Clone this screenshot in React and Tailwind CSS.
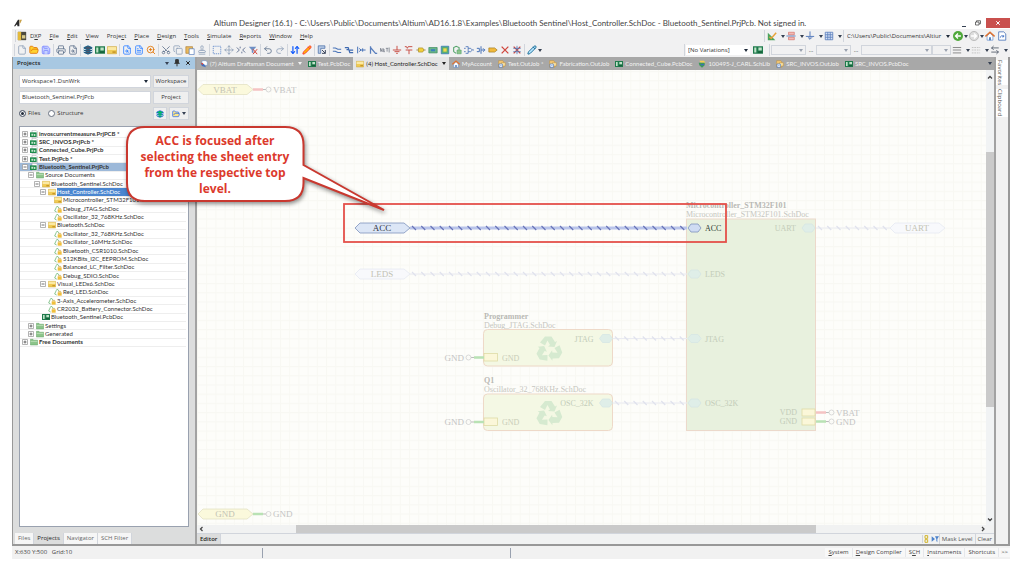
import {
  ArrowDownUp, ArrowLeftRight, Copy, File, FileSearch, FileText, FolderOpen,
  Layers, Move, Pencil, Printer, Redo2, Save, Scissors, Stamp, Undo2, X, ZoomIn,
} from "lucide-react";
import clsx from "clsx";

const menus = [
  "D&XP", "&File", "&Edit", "&View", "Proje&ct", "&Place", "&Design", "&Tools",
  "&Simulate", "&Reports", "&Window", "&Help",
];

const tree = [
  { level: 0, icon: "project", label: "invoscurrentmeasure.PrjPCB *", open: false, bold: true },
  { level: 0, icon: "project", label: "SRC_INVOS.PrjPcb *", open: false, bold: true },
  { level: 0, icon: "project", label: "Connected_Cube.PrjPcb", open: false, bold: true },
  { level: 0, icon: "project", label: "Test.PrjPcb *", open: false, bold: true },
  { level: 0, icon: "project", label: "Bluetooth_Sentinel.PrjPcb", open: true, bold: true, active: true },
  { level: 1, icon: "folder", label: "Source Documents", open: true },
  { level: 2, icon: "sheet", label: "Bluetooth_Sentinel.SchDoc", open: true },
  { level: 3, icon: "sheet", label: "Host_Controller.SchDoc", open: true, selected: true },
  { level: 4, icon: "sheet", label: "Microcontroller_STM32F101.SchDoc" },
  { level: 4, icon: "device", label: "Debug_JTAG.SchDoc" },
  { level: 4, icon: "device", label: "Oscillator_32_768KHz.SchDoc" },
  { level: 3, icon: "sheet", label: "Bluetooth.SchDoc", open: true },
  { level: 4, icon: "device", label: "Oscillator_32_768KHz.SchDoc" },
  { level: 4, icon: "device", label: "Oscillator_16MHz.SchDoc" },
  { level: 4, icon: "device", label: "Bluetooth_CSR1010.SchDoc" },
  { level: 4, icon: "device", label: "512KBits_I2C_EEPROM.SchDoc" },
  { level: 4, icon: "device", label: "Balanced_LC_Filter.SchDoc" },
  { level: 4, icon: "device", label: "Debug_SDIO.SchDoc" },
  { level: 3, icon: "sheet", label: "Visual_LEDx6.SchDoc", open: true },
  { level: 4, icon: "device", label: "Red_LED.SchDoc" },
  { level: 3, icon: "device", label: "3-Axis_Accelerometer.SchDoc" },
  { level: 3, icon: "device", label: "CR2032_Battery_Connector.SchDoc" },
  { level: 2, icon: "pcb", label: "Bluetooth_Sentinel.PcbDoc" },
  { level: 1, icon: "folder", label: "Settings", open: false },
  { level: 1, icon: "folder", label: "Generated", open: false },
  { level: 0, icon: "folder", label: "Free Documents", open: false, bold: true },
];

const indents = ["pl-0.5", "pl-2", "pl-3.5", "pl-5", "pl-[26px]"];

function Glyph({ className = "size-2.5", children }) {
  return (
    <svg viewBox="0 0 12 12" fill="none" className={clsx("shrink-0", className)} aria-hidden="true">
      {children}
    </svg>
  );
}

const glyphs = {
  pcb: (
    <>
      <path d="M0 1.5h12v9H0z" fill="#1f7a4c" />
      <path d="M1.5 3h2.500v6H1.5zM6.500 3h4v3.500h-4z" fill="#bfe3c8" />
      <path d="M6 8.500h5" stroke="#0f4d2e" />
    </>
  ),
  project: (
    <>
      <path d="M3 0.500h6l2.500 2.500v8.500H3z" fill="#fff" stroke="#9aa0a6" strokeWidth="0.800" />
      <path d="M0 3.500h10v7H0z" fill="#1e8a4c" />
      <path d="M2 5.500h3v3H2zM6 6h2v3H6z" fill="#bfe3c8" />
    </>
  ),
  sheet: (
    <>
      <path d="M0.500 2h11v8.500h-11z" fill="#f0cb55" stroke="#c9a233" strokeWidth="0.700" />
      <path d="M1 2.500h10v3.500H1z" fill="#fbe9a4" />
      <path d="M6.500 7.500h4v2h-4z" fill="#c9982a" />
    </>
  ),
  folder: (
    <>
      <path d="M0.500 2h4l1 1.300h6v7.200h-11z" fill="#8cc48a" stroke="#62a063" strokeWidth="0.700" />
      <path d="M1 5h10v1H1z" fill="#c7e6c3" />
    </>
  ),
  device: (
    <>
      <path d="M1 9 3.500 3.500 5 1.500 7.500 5M1 9l3 1.500" stroke="#6fb878" strokeWidth="1.200" />
      <path d="M5.500 6.500H11.500V11.500H5.500z" fill="#f0bf3c" />
      <path d="M7 6.500V5h3v1.500" stroke="#c9a040" />
    </>
  ),
  outjob: (
    <>
      <path d="M1 1h6l1.500 2v8H1z" fill="#f3c877" stroke="#c08a30" strokeWidth="0.700" />
      <path d="M5 4h6v5H5z" fill="#f7dfa0" stroke="#c08a30" strokeWidth="0.700" />
      <path d="M1.500 6h5v5h-5z" fill="#fff" stroke="#3f73c4" />
      <path d="M3 9.500 5 7.500" stroke="#3f73c4" />
    </>
  ),
  home: (
    <>
      <path d="M2.500 6v5h7V6L6 2.500z" fill="#fff" stroke="#5a87c8" strokeWidth="0.800" />
      <path d="M0.500 6.500 6 1.500l5.500 5" stroke="#e0722e" strokeWidth="1.800" />
      <path d="M5 7.500h2V11H5z" fill="#3c6fb5" />
    </>
  ),
  draftsman: (
    <>
      <path d="M3 1h6l2 2v5H3z" fill="#fff" stroke="#6a8fc9" strokeWidth="0.800" />
      <path d="M1 5l5 1 3 5-6-2z" fill="#3c6fc4" />
      <path d="M1 4l4 1-1 3z" fill="#d9473d" />
    </>
  ),
  schlib: (
    <>
      <path d="M2 1h7l2 3H4z" fill="#f2cf54" />
      <path d="M1 4h9v4l-4 3.500L2 8z" fill="#3f9a58" />
      <path d="M4 6h5v2H4z" fill="#3c6fb5" />
    </>
  ),
  wire: <path d="M1 3.500h3l3 1.500h4M1 7.500h3l3 1.500h4" stroke="#4a74b8" strokeWidth="1.300" />,
  bus: <path d="M1 3h4l2 6h4M3 5.500h2M7 6h4" stroke="#3e69b0" strokeWidth="1.500" />,
  harness: <path d="M2 2v8M4.500 6h7M4 4l2 2-2 2M8 4v4" stroke="#4a74b8" strokeWidth="1.200" />,
  entry: <path d="M3 1.500v9M3 3l6 7h2" stroke="#5a7fbd" strokeWidth="1.500" />,
  net: <path d="M0.500 8V4l2 4V4M4 4v4h2M4 6h2M7 4h3M8.500 4v4M11 3v6" stroke="#6f7683" strokeWidth="0.900" />,
  gnd: <path d="M6 1v5M1 6h10M3 8h6M5 10h2" stroke="#c9534b" strokeWidth="1.200" />,
  vcc: <path d="M1 2h2l1 2 1-2h5M2 6h8M6 6v5" stroke="#c9534b" strokeWidth="1.200" />,
  part: (
    <>
      <path d="M0.500 6h11" stroke="#8b7a3a" />
      <path d="M3 3.500h5l1.500 2.500L8 8.500H3z" fill="#f2cf3c" stroke="#a98c25" strokeWidth="0.800" />
    </>
  ),
  block: (
    <>
      <path d="M1 3h10v6.500H1z" fill="#69b58a" stroke="#3d8a5e" strokeWidth="0.800" />
      <path d="M3.500 5h5v2.500h-5z" fill="#3b7fbd" />
    </>
  ),
  blockEntry: (
    <>
      <path d="M1.500 1.500h9v9h-9z" fill="#58ad72" stroke="#3b7fbd" />
      <path d="M4 4h4v4H4z" fill="#f2d84a" />
    </>
  ),
  deviceSheet: (
    <>
      <path d="M2 8V3l3-1.500L8.500 3v3M2 8l3 2" stroke="#53a36a" strokeWidth="1.300" />
      <path d="M6 6h5v4.500H6z" fill="#8cc48a" stroke="#53a36a" strokeWidth="0.700" />
    </>
  ),
  connector: <path d="M2 2h3v8H2M5 4h3l2 2-2 2H5M0 4h2M0 8h2M10 6h2" stroke="#4a74b8" />,
  connectorEntry: <path d="M6 1.500v9M1 4h3v4H1M6 6h5M8.500 4l2 2-2 2" stroke="#4a74b8" strokeWidth="1.200" />,
  port: <path d="M1 3.500h7L11 6 8 8.500H1z" fill="#f2b93c" stroke="#a07a20" strokeWidth="0.800" />,
  cross: <path d="M2 2l8 8M10 2l-8 8" stroke="#d0443b" strokeWidth="1.500" />,
  crossMask: (
    <>
      <path d="M2 2l8 8M10 2l-8 8" stroke="#d0443b" strokeWidth="1.500" />
      <path d="M6 1v10M1.500 4h9M1.500 8h9" stroke="#4a74b8" strokeWidth="0.900" />
    </>
  ),
  paste: (
    <>
      <path d="M1 2h8v8H1z" fill="#e9b95d" stroke="#a3742a" strokeWidth="0.700" />
      <path d="M5 4.500h6V11.500H5z" fill="#fff" stroke="#4a74b8" strokeWidth="0.800" />
    </>
  ),
  marquee: <path d="M1.500 1.500h9v9h-9z" stroke="#5b86c9" strokeDasharray="1.500 1" />,
  deselect: <path d="M1 3l3 3-3 3M11 3 8 6l3 3M5 2v2M7 8v2" stroke="#4e5f86" />,
  clearFilter: (
    <>
      <path d="M1 2h9L6.500 6v4l-2-1V6z" fill="#6f8fc4" />
      <path d="M6 5l5 6M11 5l-5 6" stroke="#d0443b" strokeWidth="1.200" />
    </>
  ),
  browse: (
    <>
      <path d="M1.500 1v9h3V4h5V1z" fill="#b9cbe6" stroke="#4a6ea8" strokeWidth="0.900" />
      <path d="M6 6l4 4M10 6v4H6" stroke="#3d485e" strokeWidth="1.200" />
    </>
  ),
  measure: (
    <>
      <path d="M1 2v9h9z" fill="#4ba35c" />
      <path d="M3 7l2 2 6-7" stroke="#e8a33a" strokeWidth="1.800" />
    </>
  ),
  align: (
    <>
      <path d="M3 1.500h7v3H3zM3 7.500h7v3H3z" fill="#f2b9b4" stroke="#d0645c" strokeWidth="0.700" />
      <path d="M0.500 6h11" stroke="#4a74b8" />
    </>
  ),
  power: <path d="M6 0.500v9M1 6.500h10M3.500 7.500 6 10l2.500-2.500" stroke="#5b7fbd" strokeWidth="1.200" />,
  grid: <path d="M1.500 1.500h9v9h-9zM4.500 1.500v9M7.500 1.500v9M1.500 4.500h9M1.500 7.500h9" fill="#d5e1f5" stroke="#5b7fbd" />,
  back: (
    <>
      <circle cx="6" cy="6" r="6" fill="#4fa83a" />
      <path d="M9.500 6H3M6 3 3 6l3 3" stroke="#fff" strokeWidth="1.600" />
    </>
  ),
  forward: (
    <>
      <circle cx="6" cy="6" r="5.500" fill="#dcdcdc" stroke="#b5b5b5" />
      <path d="M2.500 6H9M6 3l3 3-3 3" stroke="#fff" strokeWidth="1.600" />
    </>
  ),
  lines: <path d="M1 3h10M1 6h10M1 9.500h10" stroke="#8d8d8d" strokeWidth="1.200" />,
  dashes: <path d="M1 3h10M1 6h10M1 9.500h10" stroke="#bcbcbc" strokeDasharray="2 1" />,
  page: (
    <>
      <path d="M2 1h6l2.500 2.500V11H2z" fill="#fff" stroke="#4a74b8" />
      <path d="M4 8c0-3 4-3 4-1M8 5v2H6" stroke="#3c6fc4" />
    </>
  ),
};

const toolGroups = [
  [
    ["New", <File className="size-2.5 text-slate-400" />],
    ["Open", <FolderOpen className="size-2.5 fill-amber-300 text-amber-600" />],
    ["Save", <Save className="size-2.5 fill-indigo-200 text-indigo-400" />],
  ],
  [
    ["Print", <Printer className="size-2.5 text-slate-500" />],
    ["Print preview", <FileSearch className="size-2.5 text-slate-500" />],
  ],
  [
    ["Devices view", <Layers className="size-2.5 fill-slate-600 text-sky-800" />],
    ["Board", "pcb"],
    ["Sheet", "sheet"],
  ],
  [
    ["Zoom document", <FileSearch className="size-2.5 text-blue-500" />],
    ["Zoom area", <FileText className="size-2.5 text-blue-500" />],
    ["Zoom selected", <ZoomIn className="size-2.5 text-amber-600" />],
  ],
  [
    ["Cut", <Scissors className="size-2.5 -rotate-90 text-slate-500" />],
    ["Copy", <Copy className="size-2.5 text-slate-400" />],
    ["Paste", "paste"],
    ["Rubber stamp", <Stamp className="size-2.5 text-slate-400" />],
  ],
  [
    ["Select area", "marquee"],
    ["Move", <Move className="size-2.5 text-slate-400" />],
    ["Deselect", "deselect"],
    ["Clear filter", "clearFilter"],
  ],
  [
    ["Undo", <Undo2 className="size-2.5 text-slate-500" />],
    ["Redo", <Redo2 className="size-2.5 text-slate-400" />],
  ],
  [
    ["Hierarchy", <ArrowDownUp className="size-2.5 text-blue-600" strokeWidth={3} />],
    ["Cross probe", <Pencil className="size-2.5 fill-amber-400 text-red-500" />],
  ],
  [["Browse", "browse"]],
  [
    ["Wire", "wire"], ["Bus", "bus"], ["Harness", "harness"], ["Bus entry", "entry"],
    ["Net label", "net"], ["Ground", "gnd"], ["VCC", "vcc"], ["Part", "part"],
    ["Sheet symbol", "block"], ["Sheet entry", "blockEntry"], ["Device sheet", "deviceSheet"],
    ["Harness connector", "connector"], ["Harness entry", "connectorEntry"], ["Port", "port"],
    ["No ERC", "cross"], ["Compile mask", "crossMask"],
  ],
  [["Highlight", <Pencil className="size-2.5 fill-sky-200 text-sky-800" />]],
];

const tabs = [
  { icon: "draftsman", label: "(7) Altium Draftsman Document", caret: true },
  { icon: "pcb", label: "Test.PcbDoc" },
  { icon: "sheet", label: "(4) Host_Controller.SchDoc", caret: true, active: true },
  { icon: "home", label: "MyAccount" },
  { icon: "outjob", label: "Test.OutJob *" },
  { icon: "outjob", label: "Fabrication.OutJob" },
  { icon: "pcb", label: "Connected_Cube.PcbDoc" },
  { icon: "schlib", label: "100495-J_CARL.SchLib" },
  { icon: "outjob", label: "SRC_INVOS.OutJob" },
  { icon: "pcb", label: "SRC_INVOS.PcbDoc" },
];

function Mnemonic({ text }) {
  const [before, after] = text.split("&");
  return (
    <>
      {before}
      <span className="underline">{after[0]}</span>
      {after.slice(1)}
    </>
  );
}

function Caret({ className = "text-gray-700" }) {
  return (
    <svg viewBox="0 0 4 3" className={clsx("h-[3px] w-1 shrink-0", className)} aria-hidden="true">
      <path d="M0 0h4L2 3z" fill="currentColor" />
    </svg>
  );
}

function Divider() {
  return <span className="mx-px h-3 w-px shrink-0 bg-gray-300" />;
}

function Tool({ label, icon }) {
  return (
    <button type="button" aria-label={label} className="flex size-3 shrink-0 items-center justify-center">
      {typeof icon === "string" ? <Glyph>{glyphs[icon]}</Glyph> : icon}
    </button>
  );
}

function DropTool({ label, icon, tight }) {
  return (
    <span className={clsx("flex shrink-0 items-center", tight ? "w-4" : "w-[19px] gap-[3px]")}>
      <Tool label={label} icon={icon} />
      <Caret />
    </span>
  );
}

function Combo({ label, value = "", className, muted }) {
  return (
    <span className={clsx("relative flex items-center", className)}>
      <select aria-label={label} className="h-full w-full appearance-none pl-0.5 outline-none">
        <option>{value}</option>
      </select>
      <span className="pointer-events-none absolute right-0.5">
        <Caret className={muted ? "text-gray-400" : "text-gray-800"} />
      </span>
    </span>
  );
}

function TitleBar() {
  return (
    <header className="flex h-3 items-center bg-white">
      <svg viewBox="0 0 12 12" className="ml-0.5 size-2" aria-hidden="true">
        <path d="M0 11 6 1h2v10H5V8.500H3.500L2 11z" fill="#2b2b2b" />
        <path d="M8.500 1H12L9.500 6.500h-1z" fill="#c9a24a" />
      </svg>
      <h1 className="flex-1 truncate pl-10 text-center font-['Lato','Open_Sans',sans-serif] text-[8px] leading-3 text-[#444]">
        Altium Designer (16.1) - C:\Users\Public\Documents\Altium\AD16.1.8\Examples\Bluetooth
        Sentinel\Host_Controller.SchDoc - Bluetooth_Sentinel.PrjPcb. Not signed in.
      </h1>
      <button type="button" aria-label="Minimize" className="flex h-2 w-3 items-end justify-center">
        <span className="h-px w-1 bg-gray-700" />
      </button>
      <button type="button" aria-label="Restore" className="flex h-2 w-4 items-center justify-center">
        <Glyph className="size-1.5">
          <path d="M1 4h7v6H1zM3 4V1.500h8v6H8" stroke="#444" strokeWidth="1.500" />
        </Glyph>
      </button>
      <button type="button" aria-label="Close" className="flex h-2.5 w-6 items-center justify-center bg-[#c9504e] text-white">
        <X className="size-1.5" strokeWidth={4} />
      </button>
    </header>
  );
}

function MenuBar() {
  return (
    <div className="flex h-3.5 items-center pl-0.5">
      <Divider />
      <svg viewBox="0 0 12 12" className="mr-px size-2.5" aria-hidden="true">
        <path d="M1 1h10v10H1z" fill="#4c4a3e" />
        <path d="M1 1h4v10H1z" fill="#e4ba3a" />
        <path d="M6 5h4v4H6z" fill="#d7c98a" />
      </svg>
      <nav className="flex gap-2 pl-0.5">
        {menus.map((menu) => (
          <button key={menu} type="button">
            <Mnemonic text={menu} />
          </button>
        ))}
      </nav>
      <div className="ml-auto flex items-center pr-0.5">
        <Divider />
        <DropTool label="Utilities" icon="measure" />
        <DropTool label="Alignment" icon="align" />
        <DropTool label="Power sources" icon="power" />
        <DropTool label="Grids" icon="grid" />
        <Divider />
        <Combo label="Path" value="C:\Users\Public\Documents\Altiur" className="h-3 w-[107px]" />
        <DropTool label="Back" icon="back" tight />
        <DropTool label="Forward" icon="forward" tight />
        <Tool label="Home" icon="home" />
        <Tool label="Page" icon="page" />
      </div>
    </div>
  );
}

function ToolBar() {
  return (
    <div className="flex h-3.5 items-center pl-px">
      {toolGroups.map((group, i) => (
        <div key={i} className="flex items-center">
          <Divider />
          {group.map(([label, icon]) => (
            <Tool key={label} label={label} icon={icon} />
          ))}
        </div>
      ))}
      <Caret />
      <div className="ml-auto flex items-center pr-0.5">
        <Divider />
        <Combo label="Variations" value="[No Variations]" className="mr-0.5 h-2.5 w-16 bg-white" />
        <Tool label="Board" icon="pcb" />
        <span className="w-1" />
        <Divider />
        <Combo label="Filter" muted className="h-2.5 w-[35px] border border-gray-300" />
        <span className="w-2.5 text-center leading-3">...</span>
        <Combo label="Mask" muted className="h-2.5 w-[35px] border border-gray-300" />
        <span className="w-2.5 text-center leading-3">...</span>
        <Combo label="Font" muted className="h-2.5 w-[71px] border border-gray-300" />
        <Combo label="Size" muted className="h-2.5 w-[19px] border border-gray-300" />
        <DropTool label="Line style" icon="lines" />
        <DropTool label="Line width" icon="dashes" />
        <DropTool label="Arrows" icon={<ArrowLeftRight className="size-2.5 text-gray-600" />} />
      </div>
    </div>
  );
}

function TreeRow({ node }) {
  return (
    <li
      className={clsx(
        "flex items-center border-b border-[#eeeeee]",
        indents[node.level],
        node.active && "bg-[#9db9d9]",
        node.bold && "font-bold"
      )}
    >
      <span className="flex w-2 shrink-0 items-center">
        {node.open !== undefined && (
          <Glyph className="size-1.5">
            <path d="M1 1h10v10H1z" fill="#fff" stroke="#999" strokeWidth="1.500" />
            <path d={node.open ? "M3 6h6" : "M3 6h6M6 3v6"} stroke="#444" strokeWidth="1.500" />
          </Glyph>
        )}
      </span>
      <Glyph className="mr-px size-2">{glyphs[node.icon]}</Glyph>
      <span className={clsx("leading-[8px] whitespace-nowrap", node.selected && "flex-1 bg-[#4a86d0] text-white")}>
        {node.label}
      </span>
    </li>
  );
}

function ProjectsPanel() {
  return (
    <aside className="flex w-[182px] shrink-0 flex-col bg-[#dcdddd]">
      <div className="flex h-3 items-center gap-1 bg-[#a8c8e2] px-1 text-[#222]">
        <h2 className="flex-1 font-semibold">Projects</h2>
        <Caret />
        <Glyph className="size-2">
          <path d="M4 1h4v5H4zM2 6.500h8M6 7v4" fill="#333" stroke="#333" strokeWidth="1.500" />
        </Glyph>
        <X className="size-1.5" strokeWidth={4} />
      </div>
      <form className="grid auto-rows-[13px] grid-cols-[1fr_36px] gap-x-0.5 gap-y-[3px] px-1.5 pt-1.5">
        <Combo label="Workspace" value="Workspace1.DsnWrk" className="border border-gray-300 bg-white" />
        <button type="button" className="border border-gray-300 bg-[#efefef]">Workspace</button>
        <input aria-label="Project" defaultValue="Bluetooth_Sentinel.PrjPcb" className="min-w-0 border border-gray-300 bg-white pl-0.5" />
        <button type="button" className="border border-gray-300 bg-[#efefef]">Project</button>
        <div className="flex items-center gap-2">
          {["Files", "Structure"].map((mode) => (
            <label key={mode} className="flex items-center gap-0.5">
              <input
                type="radio"
                name="mode"
                defaultChecked={mode === "Files"}
                className="size-[7px] appearance-none rounded-full border border-gray-500 bg-white checked:bg-gray-800 checked:shadow-[inset_0_0_0_1px_white]"
              />
              {mode}
            </label>
          ))}
        </div>
        <div className="flex justify-between">
          <button type="button" aria-label="Refresh" className="flex w-3.5 items-center justify-center border border-gray-300 bg-[#efefef]">
            <Layers className="size-2 fill-green-500 text-blue-700" />
          </button>
          <button type="button" aria-label="Options" className="flex w-5 items-center justify-center gap-0.5 border border-gray-300 bg-[#efefef]">
            <FolderOpen className="size-2 fill-amber-200 text-blue-600" />
            <Caret />
          </button>
        </div>
      </form>
      <div className="m-1.5 flex-1 overflow-hidden border border-gray-400 bg-white pt-[3px] pr-0.5">
        <ul className="grid h-[217px] auto-rows-fr grid-cols-1 font-['Lato','Open_Sans',sans-serif]">
          {tree.map((node, i) => (
            <TreeRow key={i} node={node} />
          ))}
        </ul>
      </div>
      <div className="flex h-[11px] items-center pl-0.5">
        {["Files", "Projects", "Navigator", "SCH Filter"].map((tab) => (
          <button
            key={tab}
            type="button"
            className={clsx(
              "h-full border-r border-gray-300 px-[3px]",
              tab === "Projects" ? "bg-[#dcdddd] text-[#222]" : "bg-[#f6f6f6] text-[#666]"
            )}
          >
            {tab}
          </button>
        ))}
      </div>
    </aside>
  );
}

function Port({ x, y, label, fill, stroke, text = "#c3c3b4" }) {
  return (
    <g>
      <path d={`M${x} ${y}l5-5h44l6 5-6 5h-44z`} fill={fill} stroke={stroke} strokeWidth="0.800" />
      <text x={x + 27} y={y + 3} textAnchor="middle" fill={text}>{label}</text>
    </g>
  );
}

function SheetEntry({ x, y, label, left, live }) {
  return (
    <g>
      <path
        d={`M${x} ${y}l3-4h7l3 4-3 4h-7z`}
        fill={live ? "#cfdcf3" : "#dfeee8"}
        stroke={live ? "#7d93bd" : "#d5e6e4"}
        strokeWidth="0.800"
      />
      <text
        x={left ? x - 6 : x + 17}
        y={y + 3}
        textAnchor={left ? "end" : "start"}
        fill={live ? "#2f3a33" : "#c3ccb9"}
        className="text-[8px]"
      >
        {label}
      </text>
    </g>
  );
}

function Harness({ x1, x2, y, live }) {
  const ticks = [];
  for (let x = x1 + 2; x < x2 - 3; x += 9.25) ticks.push(`M${x} ${y - 2}l4 4`);
  return (
    <g>
      <path d={`M${x1} ${y}H${x2}`} stroke={live ? "#b9c4ea" : "#eaebf2"} strokeWidth={live ? 3 : 1} />
      <path d={ticks.join("")} stroke={live ? "#6874b8" : "#e0e2ed"} strokeWidth="1.200" />
    </g>
  );
}

function PowerPin({ x, y, label, color, flip }) {
  const dir = flip ? -1 : 1;
  return (
    <g>
      <path d={`M${x} ${y}h${10 * dir}`} stroke={color} strokeWidth="2.500" />
      <path d={`M${x + 10 * dir} ${y}h${3 * dir}`} stroke="#bdbdbd" />
      <circle cx={x + 15.5 * dir} cy={y} r="2.500" stroke="#cfcfcf" strokeWidth="0.800" />
      <text x={x + 20 * dir} y={y + 3} textAnchor={flip ? "end" : "start"} fill="#c4c4c4">{label}</text>
    </g>
  );
}

function Recycle({ x, y }) {
  const arrow = "M9 2h6.500l3.500 5.500 2-1-2.500 6-6.500-0.500 2-1.500-2.500-4.500-2.500 5-5-3z";
  return (
    <g transform={`translate(${x} ${y})`} fill="#d6ead0">
      <path d={arrow} />
      <path d={arrow} transform="rotate(120 13 15)" />
      <path d={arrow} transform="rotate(240 13 15)" />
    </g>
  );
}

function DeviceSheet({ y, name, file, entry }) {
  return (
    <g>
      <g className="text-[8px]">
        <text x="287" y={y - 11} fill="#b9b9b4" fontWeight="bold">{name}</text>
        <text x="287" y={y - 2} fill="#c6c6c0">{file}</text>
      </g>
      <rect x="286.500" y={y} width="129" height="36.500" rx="4" fill="#f4f8e4" stroke="#eed9c8" />
      <Recycle x={339} y={y + 5} />
      <SheetEntry x={402.5} y={y + 9} label={entry} left />
      <Harness x1={416} x2={490} y={y + 9} />
      <rect x="287" y={y + 24} width="13.500" height="7.500" fill="#fbf7d9" stroke="#dedba6" strokeWidth="0.800" />
      <text x="305" y={y + 31} fill="#c9cdb8" className="text-[8px]">GND</text>
      <PowerPin x={287} y={y + 28} label="GND" color="#b9e2b4" flip />
    </g>
  );
}

function Schematic() {
  return (
    <svg className="min-w-0 flex-1 bg-[#fdfdfa] font-['Liberation_Serif',serif] text-[9px]" fill="none" role="img" aria-label="Host controller schematic">
      <defs>
        <pattern id="grid" width="9.220" height="9.220" patternUnits="userSpaceOnUse">
          <path d="M0.500 0v9.220M0 1.500h9.220" stroke="#f8f8f3" />
        </pattern>
      </defs>
      <rect width="100%" height="100%" fill="url(#grid)" />

      <Port x={1} y={19.5} label="VBAT" fill="#fbf9dc" stroke="#e3e2c4" />
      <PowerPin x={56} y={19.5} label="VBAT" color="#f5c3c3" />
      <Port x={1} y={444} label="GND" fill="#fbf9dc" stroke="#e3e2c4" />
      <PowerPin x={56} y={444} label="GND" color="#b9e2b4" />

      <g className="text-[8px]">
        <text x="489" y="138" fill="#b9b9b4" fontWeight="bold">Microcontroller_STM32F101</text>
        <text x="489" y="147" fill="#c6c6c0">Microcontroller_STM32F101.SchDoc</text>
      </g>
      <rect x="489.500" y="149" width="129" height="211.500" fill="#e8f1de" stroke="#ecd9cb" />

      <Port x={158} y={158} label="ACC" fill="#dce6f6" stroke="#7d93bd" text="#2f3240" />
      <Harness x1={213} x2={490} y={158} live />
      <SheetEntry x={491} y={158} label="ACC" live />
      <Port x={158} y={204} label="LEDS" fill="#f8f9fc" stroke="#e6eaf2" />
      <Harness x1={213} x2={490} y={204} />
      <SheetEntry x={491} y={204} label="LEDS" />
      <SheetEntry x={491} y={268.5} label="JTAG" />
      <SheetEntry x={491} y={333} label="OSC_32K" />

      <SheetEntry x={605} y={158} label="UART" left />
      <Harness x1={619} x2={693} y={158} />
      <Port x={693} y={158} label="UART" fill="#f8f9fc" stroke="#e6eaf2" />

      <rect x="605" y="339" width="13" height="7" fill="#fbf7d9" stroke="#dedba6" strokeWidth="0.800" />
      <text x="600" y="345" textAnchor="end" fill="#c3ccb9" className="text-[8px]">VDD</text>
      <PowerPin x={619} y={342.5} label="VBAT" color="#f5c3c3" />
      <rect x="605" y="348" width="13" height="7" fill="#fbf7d9" stroke="#dedba6" strokeWidth="0.800" />
      <text x="600" y="354" textAnchor="end" fill="#c3ccb9" className="text-[8px]">GND</text>
      <PowerPin x={619} y={351.5} label="GND" color="#b9e2b4" />

      <DeviceSheet y={259.5} name="Programmer" file="Debug_JTAG.SchDoc" entry="JTAG" />
      <DeviceSheet y={324} name="Q1" file="Oscillator_32_768KHz.SchDoc" entry="OSC_32K" />

      <rect x="147" y="134" width="382" height="38" stroke="#e4504a" strokeWidth="1.800" />
    </svg>
  );
}

function Editor() {
  return (
    <section className="flex min-w-0 flex-1 flex-col border-x-2 border-[#a2a2a2] bg-[#f1f2f2]">
      <div className="flex h-[13px] items-stretch bg-[#a8a8a8] font-['Lato','Open_Sans',sans-serif] text-[#f2f2f2]">
        {tabs.map((tab) => (
          <button
            key={tab.label}
            type="button"
            className={clsx(
              "flex shrink-0 items-center gap-0.5 px-[3px] whitespace-nowrap",
              tab.active && "bg-[#e4e4e4] text-[#222]"
            )}
          >
            <Glyph className="size-2">{glyphs[tab.icon]}</Glyph>
            {tab.label}
            {tab.caret && <span className="pl-0.5"><Caret className="text-current" /></span>}
          </button>
        ))}
        <button type="button" aria-label="More tabs" className="ml-auto flex w-2 flex-col items-center justify-center text-[#222]">
          <Caret />
        </button>
      </div>
      <div className="flex flex-1">
        <Schematic />
        <div className="flex w-2 flex-col items-center bg-[#f1f3f4]">
          <Glyph className="mt-1 size-1.5"><path d="M2 9l4-4 4 4" stroke="#444" strokeWidth="2.500" /></Glyph>
          <span className="mt-[72px] h-[255px] w-full bg-[#cacaca]" />
          <Glyph className="mt-auto mb-0.5 size-1.5"><path d="M2 3l4 4 4-4" stroke="#444" strokeWidth="2.500" /></Glyph>
        </div>
      </div>
      <div className="flex h-2 items-center pr-2">
        <span className="flex w-1/8 pl-0.5">
          <Glyph className="size-1.5"><path d="M7 2L3 6l4 4" stroke="#444" strokeWidth="2.500" /></Glyph>
        </span>
        <span className="h-full w-[66%] bg-[#cacaca]" />
        <Glyph className="ml-auto size-1.5"><path d="M4 2l4 4-4 4" stroke="#444" strokeWidth="2.500" /></Glyph>
      </div>
      <div className="flex h-[11px] items-center border-t border-gray-300 text-[#555]">
        <button type="button" className="h-full border-r border-gray-300 bg-[#dcdddd] px-[3px] font-semibold text-[#222]">Editor</button>
        <button type="button" aria-label="Filter" className="ml-auto flex items-center border-l border-gray-300">
          <Glyph className="size-2"><path d="M3 1h4v4H3zM3 7h4v4H3z" stroke="#d2b52c" strokeWidth="1.500" /></Glyph>
          <Glyph className="size-2"><path d="M1 2l5 4-5 4zM6 2h6L9.500 6v5L8 9V6z" fill="#4d83cc" /></Glyph>
        </button>
        <button type="button" className="h-full border-l border-gray-300 px-0.5">Mask Level</button>
        <button type="button" className="h-full border-l border-gray-300 px-0.5">Clear</button>
      </div>
    </section>
  );
}

function Callout() {
  return (
    <div className="absolute top-[69px] left-[113px] w-[178px]">
      <svg viewBox="0 0 264 90" fill="none" className="absolute top-0 left-0 h-[90px] w-[264px] drop-shadow-[1px_2px_2px_rgb(0_0_0/0.45)]" aria-hidden="true">
        <path
          d="M19 1H159Q177.500 1 177.500 19V39L258 84 177.500 52V57Q177.500 75 159 75H19Q1 75 1 57V19Q1 1 19 1Z"
          fill="#fff"
          stroke="#c9382f"
          strokeWidth="2"
        />
      </svg>
      <p className="relative pt-[7px] text-center text-[12px] leading-4 font-bold text-[#dc3a2c]">
        ACC is focused after
        <br />
        selecting the sheet entry
        <br />
        from the respective top
        <br />
        level.
      </p>
    </div>
  );
}

function StatusBar() {
  return (
    <footer className="flex h-[13px] items-center bg-[#f1f1f1] text-[#444]">
      <span className="w-1/4 pl-[3px]">X:630 Y:500 &nbsp; Grid:10</span>
      <span className="h-2.5 w-1/4 border-x border-gray-400" />
      <div className="ml-auto flex">
        {["&System", "&Design Compiler", "S&CH", "&Instruments", "Shortcuts"].map((item) => (
          <button key={item} type="button" className="border-r border-gray-200 bg-[#f8f8f8] px-[3px]">
            {item.includes("&") ? <Mnemonic text={item} /> : item}
          </button>
        ))}
        <button type="button" className="bg-[#f8f8f8] px-0.5">&gt;&gt;</button>
      </div>
    </footer>
  );
}

export default function App() {
  return (
    <div className="flex min-h-screen flex-col bg-white pt-[17px] pr-[13px] pb-[3px] pl-3 font-['Open_Sans','Noto_Sans',sans-serif] text-[6px] leading-[9px] text-[#333]">
      <TitleBar />
      <div className="bg-[#f1f1f2]">
        <MenuBar />
        <ToolBar />
      </div>
      <main className="relative flex flex-1 border-r-2 border-b-2 border-l border-[#989898]">
        <ProjectsPanel />
        <Editor />
        <nav className="flex w-3 flex-col gap-1 bg-[#f1f1f1] py-[3px] text-[#555]">
          {["Favorites", "Clipboard"].map((name) => (
            <button key={name} type="button" className="bg-white py-0.5 leading-3 [writing-mode:vertical-rl]">
              {name}
            </button>
          ))}
        </nav>
        <Callout />
      </main>
      <StatusBar />
    </div>
  );
}
